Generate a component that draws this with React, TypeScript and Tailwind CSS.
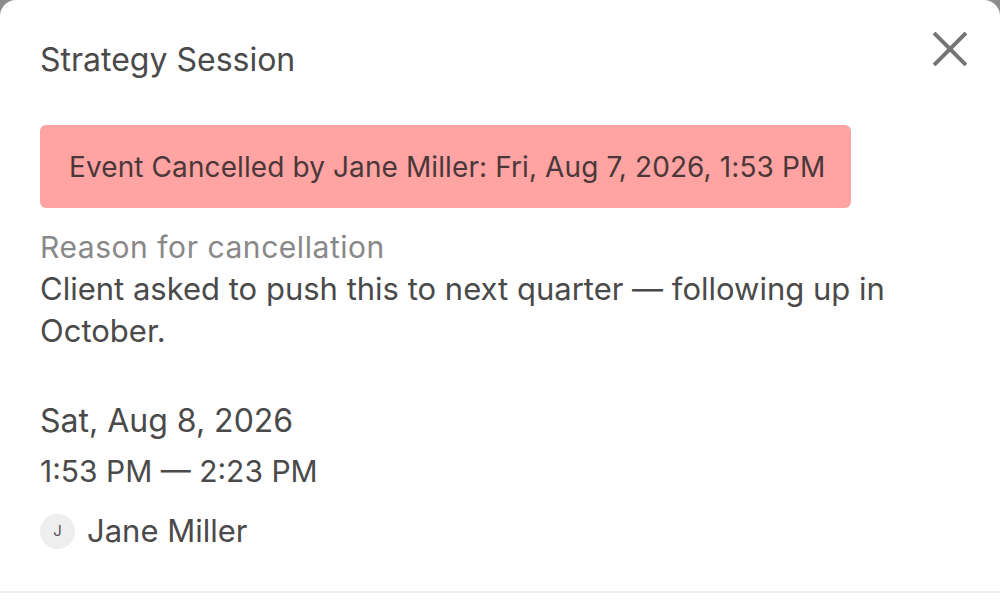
const font = { fontFamily: "Inter, 'Noto Sans', sans-serif" };

function CloseIcon() {
  return (
    <svg width="34" height="34" viewBox="0 0 34 34" fill="none" stroke="currentColor" strokeWidth="4">
      <line x1="1" y1="1" x2="33" y2="33" />
      <line x1="33" y1="1" x2="1" y2="33" />
    </svg>
  );
}

export default function App() {
  return (
    <div className="h-screen w-full overflow-hidden bg-[#8c8c8c]" style={font}>
      <div className="h-[600px] rounded-t-[16px] bg-white">
        <div className="flex h-[593px] flex-col border-b-2 border-[#eeeeee] px-[40px]">
          <div className="flex items-start justify-between pt-[40px]">
            <h1 className="text-[32px] leading-[40px] text-[#4a4a4a]">Strategy Session</h1>
            <button className="-mr-[7px] -mt-[8px] text-[#757575]">
              <CloseIcon />
            </button>
          </div>

          <div className="mt-[45px] flex h-[83px] w-[811px] items-center rounded-[6px] bg-[#ffa3a3] px-[29px]">
            <p className="whitespace-nowrap text-[28px] leading-[36px] tracking-[0.1px] text-[#4a3838]">
              Event Cancelled by Jane Miller: Fri, Aug 7, 2026, 1:53 PM
            </p>
          </div>

          <p className="mt-[20px] text-[30px] leading-[38px] tracking-[0.55px] text-[#888888]">
            Reason for cancellation
          </p>
          <p className="mt-[2px] text-[31px] leading-[42px] text-[#4a4a4a]">
            Client asked to push this to next quarter — following up in October.
          </p>

          <p className="mt-[47px] text-[32px] leading-[44px] text-[#4a4a4a]">Sat, Aug 8, 2026</p>
          <p className="mt-[6px] text-[30px] leading-[44px] text-[#4a4a4a]">1:53 PM — 2:23 PM</p>

          <div className="mt-[20px] flex items-center gap-[12px]">
            <span className="flex h-[35px] w-[35px] items-center justify-center rounded-full bg-[#eeeeee] text-[15px] text-[#555555]">
              J
            </span>
            <span className="text-[31px] leading-[36px] text-[#4a4a4a]">Jane Miller</span>
          </div>
        </div>
      </div>
    </div>
  );
}
